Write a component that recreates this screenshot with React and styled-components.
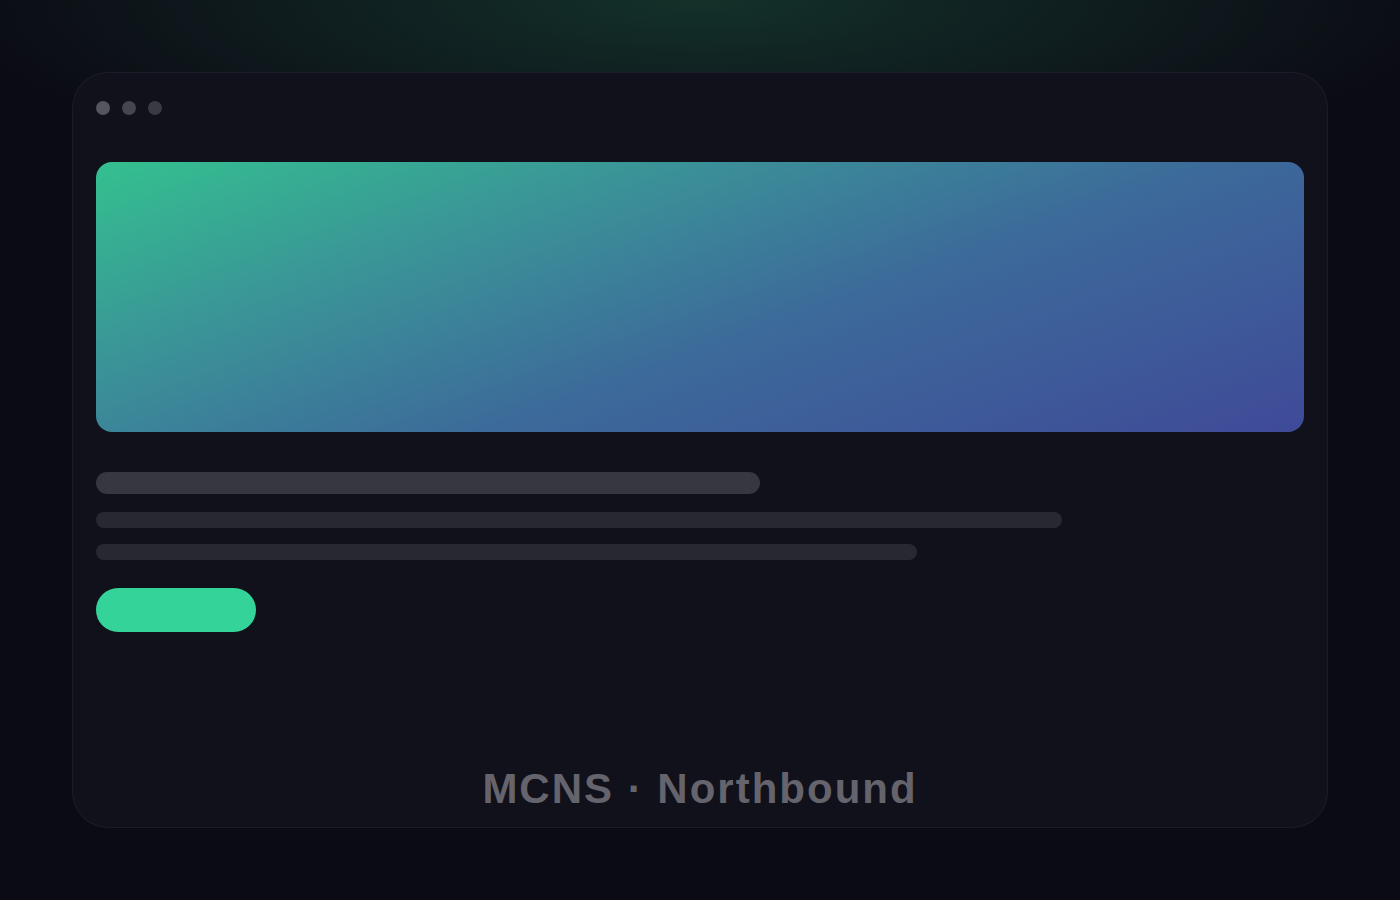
import React from "react";
import styled, { createGlobalStyle } from "styled-components";

const Global = createGlobalStyle`
  html, body { margin: 0; padding: 0; }
  body {
    background: #0b0b13;
    font-family: "Liberation Sans", Arial, sans-serif;
  }
`;

const Page = styled.div`
  width: 1400px;
  height: 900px;
  box-sizing: border-box;
  padding: 72px 72px 0;
  background:
    radial-gradient(ellipse 760px 190px at 50% 0%, rgba(26, 80, 60, 0.55), rgba(22, 60, 52, 0.35) 55%, transparent 100%),
    #0b0b13;
`;

const Window = styled.div`
  width: 1256px;
  height: 756px;
  box-sizing: border-box;
  border-radius: 36px;
  background: #11111b;
  border: 1px solid rgba(120, 160, 170, 0.09);
  padding: 23px 23px 0;
  display: flex;
  flex-direction: column;
`;

const Chrome = styled.div`
  height: 24px;
  display: flex;
  align-items: center;
  gap: 12px;
`;

const Dot = styled.span`
  width: 14px;
  height: 14px;
  border-radius: 50%;
  background: ${(p) => p.$c};
`;

const Hero = styled.div`
  margin-top: 42px;
  height: 270px;
  border-radius: 16px;
  background: linear-gradient(160deg, #34c08f 0%, #3b8f98 32%, #3c6a9a 58%, #3f4a98 100%);
`;

const Lines = styled.div`
  margin-top: 40px;
  display: flex;
  flex-direction: column;
  gap: 16px;
`;

const Bar = styled.div`
  height: ${(p) => p.$h}px;
  border-radius: ${(p) => p.$h / 2}px;
  background: ${(p) => p.$c};
  margin-bottom: ${(p) => p.$mb || 0}px;
`;

const Action = styled.div`
  margin-top: 28px;
  width: 160px;
  height: 44px;
  border-radius: 22px;
  background: #34d399;
`;

const Footer = styled.div`
  margin-top: auto;
  padding-bottom: 14px;
  text-align: center;
  font-size: 42px;
  font-weight: 700;
  letter-spacing: 2px;
  color: #65646d;
`;

export default function App() {
  return (
    <>
      <Global />
      <Page>
        <Window>
          <Chrome>
            <Dot $c="#55555f" />
            <Dot $c="#45454f" />
            <Dot $c="#3a3a44" />
          </Chrome>
          <Hero />
          <Lines>
            <Bar $h={22} $c="#373740" style={{ width: 664 }} $mb={2} />
            <Bar $h={16} $c="#282830" style={{ width: 966 }} />
            <Bar $h={16} $c="#282830" style={{ width: 821 }} />
          </Lines>
          <Action />
          <Footer>MCNS · Northbound</Footer>
        </Window>
      </Page>
    </>
  );
}
